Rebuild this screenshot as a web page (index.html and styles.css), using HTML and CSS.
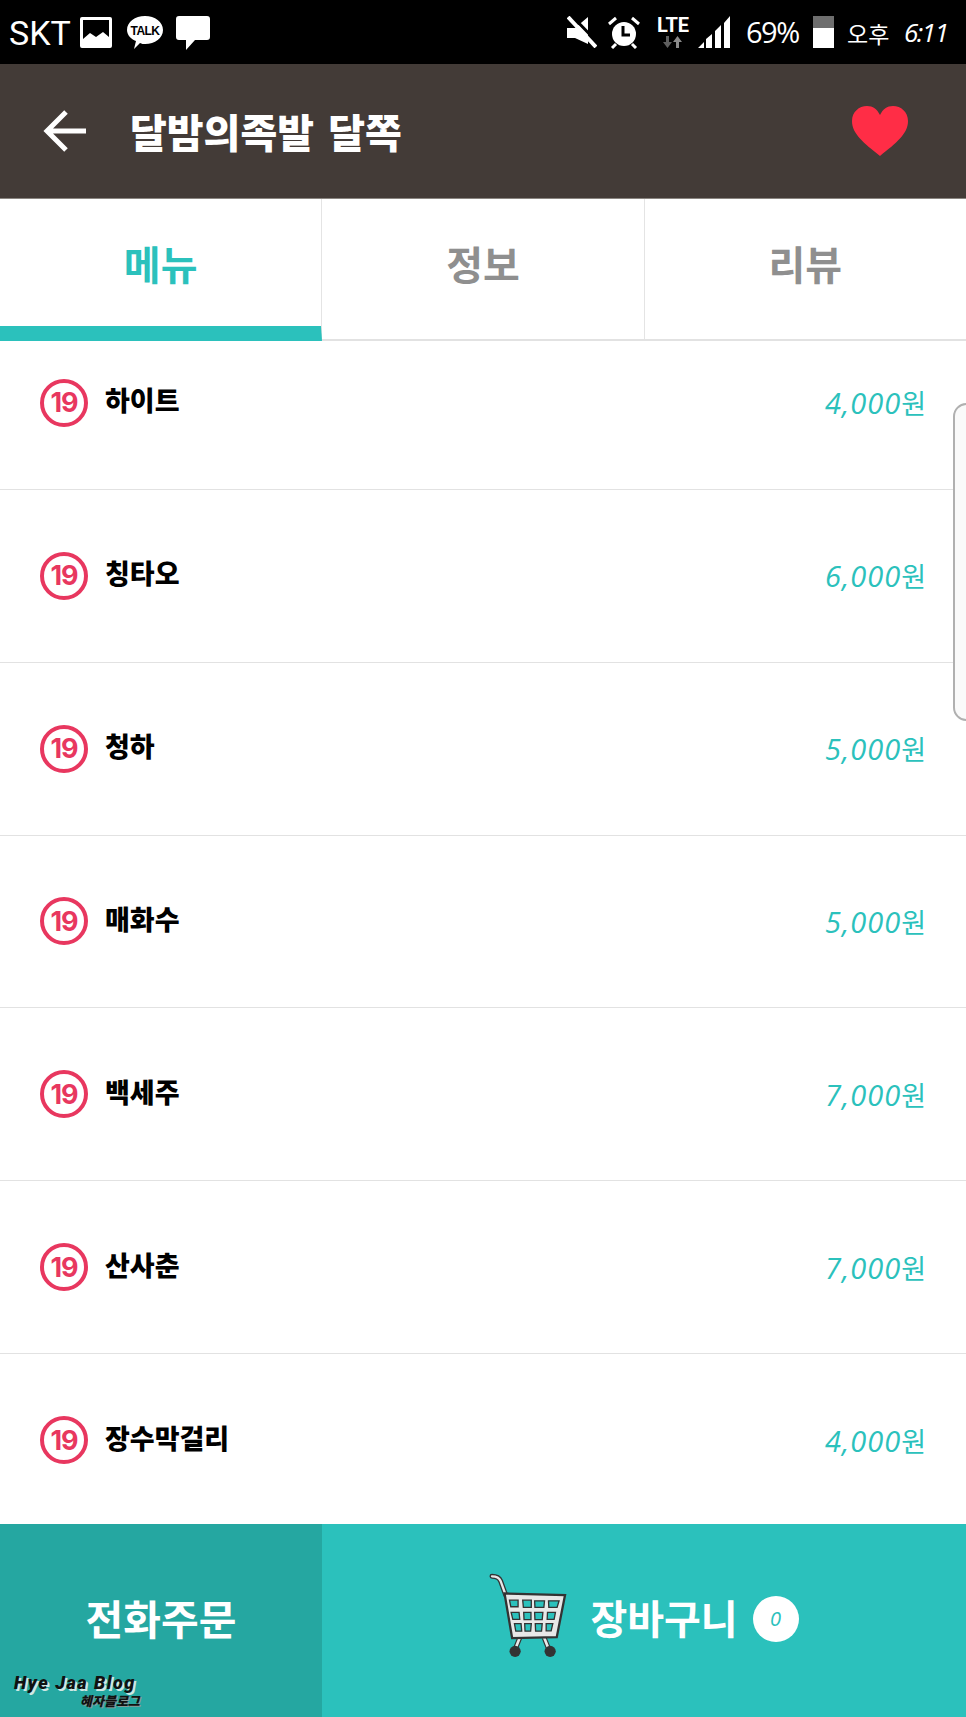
FILE: index.html
```html
<!DOCTYPE html>
<html lang="ko">
<head>
    <meta charset="UTF-8">
    <meta name="viewport" content="width=device-width, initial-scale=1.0">
    <title>달밤의족발 달쪽</title>
    <link rel="stylesheet" href="styles.css">
</head>
<body>
    <div id="page">
        <!-- Status bar -->
        <div class="status-bar">
            <div class="status-left">
                <span class="carrier">SKT</span>
                <svg class="ico-image" viewBox="0 0 32 31"><path fill="#fff" fill-rule="evenodd" d="M2 0h28a2 2 0 0 1 2 2v27a2 2 0 0 1-2 2H2a2 2 0 0 1-2-2V2a2 2 0 0 1 2-2zM3 3v19l7-6 6 4 7-5 6 5V3z"/></svg>
                <svg class="ico-talk" viewBox="0 0 36 34"><path fill="#fff" d="M18 0c10 0 18 6 18 14s-8 14-18 14c-2 0-3 0-5-1l-6 6 2-8C4 23 0 19 0 14 0 6 8 0 18 0z"/><text x="18" y="19" class="talk-text">TALK</text></svg>
                <svg class="ico-msg" viewBox="0 0 34 34"><path fill="#fff" d="M3 0h28a3 3 0 0 1 3 3v18a3 3 0 0 1-3 3H19l-9 10v-10H3a3 3 0 0 1-3-3V3a3 3 0 0 1 3-3z"/></svg>
            </div>
            <div class="status-right">
                <svg class="ico-mute" viewBox="0 0 30 32"><path fill="#fff" d="M0 12h8L21 1v27L8 22H0z"/><path stroke="#000" stroke-width="3" d="M4 -1L33 29"/><path stroke="#fff" stroke-width="4" d="M1 1L29 31"/></svg>
                <svg class="ico-alarm" viewBox="0 0 32 33"><circle cx="16" cy="18" r="12" fill="#fff"/><path d="M15 10v9h7" fill="none" stroke="#000" stroke-width="3"/><path d="M1 8L8 2M24 2L31 8M4 32L8 28M28 32L24 28" stroke="#fff" stroke-width="3"/></svg>
                <div class="lte">
                    <span class="lte-text">LTE</span>
                    <svg class="ico-arrows" viewBox="0 0 20 12"><path fill="#5e5e5e" d="M3 0h3v6h3l-4.500 6L0 6h3z"/><path fill="#8a8a8a" d="M16 12h-3V6h-3l4.500-6L19 6h-3z"/></svg>
                </div>
                <svg class="ico-signal" viewBox="0 0 33 32"><path fill="#fff" d="M0 32L6 26V32zM8 32V23L14 18V32zM17 32V15L23 9V32zM26 32V7L32 0V32z"/></svg>
                <span class="status-pct">69%</span>
                <div class="battery"><div class="battery-cap"></div></div>
                <span class="status-ampm">오후</span>
                <span class="status-time">6:11</span>
            </div>
        </div>

        <!-- Header -->
        <div class="top-bar">
            <svg class="ico-back" viewBox="0 0 44 42"><path d="M43 21H4M23 2L4 21l19 19" fill="none" stroke="#fff" stroke-width="5"/></svg>
            <h1 class="title">달밤의족발 달쪽</h1>
            <svg class="ico-heart" viewBox="0 0 56 50"><path fill="#ff2d46" d="M28 50C12 37 0 28 0 15 0 6 7 0 15 0c6 0 10 3 13 9 3-6 7-9 13-9 8 0 15 6 15 15 0 13-12 22-28 35z"/></svg>
        </div>

        <!-- Tabs -->
        <div class="tabs">
            <div class="tab tab-active">메뉴</div>
            <div class="tab">정보</div>
            <div class="tab">리뷰</div>
        </div>

        <!-- Menu list -->
        <div class="menu-list">
            <div class="menu-row menu-row-first">
                <span class="adult">19</span><span class="menu-name">하이트</span><span class="menu-price">4,000<span class="won">원</span></span>
            </div>
            <div class="menu-row">
                <span class="adult">19</span><span class="menu-name">칭타오</span><span class="menu-price">6,000<span class="won">원</span></span>
            </div>
            <div class="menu-row">
                <span class="adult">19</span><span class="menu-name">청하</span><span class="menu-price">5,000<span class="won">원</span></span>
            </div>
            <div class="menu-row">
                <span class="adult">19</span><span class="menu-name">매화수</span><span class="menu-price">5,000<span class="won">원</span></span>
            </div>
            <div class="menu-row">
                <span class="adult">19</span><span class="menu-name">백세주</span><span class="menu-price">7,000<span class="won">원</span></span>
            </div>
            <div class="menu-row">
                <span class="adult">19</span><span class="menu-name">산사춘</span><span class="menu-price">7,000<span class="won">원</span></span>
            </div>
            <div class="menu-row menu-row-last">
                <span class="adult">19</span><span class="menu-name">장수막걸리</span><span class="menu-price">4,000<span class="won">원</span></span>
            </div>
            <div class="side-handle"></div>
        </div>

        <!-- Bottom buttons -->
        <div class="bottom-bar">
            <div class="btn-phone">전화주문</div>
            <div class="btn-cart">
                <svg class="ico-cart" viewBox="145 212 236 262">
                    <path d="M154 226c14 0 22 4 26 14l16 44" fill="none" stroke="#333" stroke-width="15" stroke-linecap="round"/>
                    <path d="M154 226c14 0 22 4 26 14l16 44" fill="none" stroke="#e8e8e8" stroke-width="7" stroke-linecap="round"/>
                    <path d="M238 412l-12 30M312 412l12 30" stroke="#333" stroke-width="15"/>
                    <path d="M238 412l-12 30M312 412l12 30" stroke="#e8e8e8" stroke-width="8"/>
                    <path fill="#e8e8e8" stroke="#333" stroke-width="7" d="M192 278l183 5-25 127-135 3z"/>
                    <g fill="#2bc1bc" stroke="#333" stroke-width="4">
                        <path d="M207 298h26v20h-22zM247 298h26v22h-24zM283 300h30l-2 20h-27zM325 300h32l-6 20h-25z"/>
                        <path d="M212 335h24l2 21h-21zM250 335h22v22h-21zM283 335h25l-2 22h-22zM322 335h24l-4 21h-21z"/>
                        <path d="M222 369h20l2 23h-18zM253 369h20l-2 23h-17zM285 369h21l-2 23h-18zM318 369h20l-5 22h-15z"/>
                    </g>
                    <circle cx="224" cy="453" r="17" fill="#333"/>
                    <circle cx="330" cy="453" r="17" fill="#333"/>
                </svg>
                <span class="cart-label">장바구니</span>
                <span class="cart-count">0</span>
            </div>
            <div class="watermark">
                <div class="watermark-en">Hye Jaa Blog</div>
                <div class="watermark-ko">혜자블로그</div>
            </div>
        </div>
    </div>
</body>
</html>
```

FILE: styles.css
```css
body {
    margin: 0;
    background-color: #ffffff;
    font-family: "Noto Sans CJK KR", "Noto Sans", sans-serif;
}

#page {
    position: relative;
    display: flex;
    flex-direction: column;
    width: 966px;
    height: 1717px;
    overflow: hidden;
}

/* Status bar */
.status-bar {
    flex-shrink: 0;
    display: flex;
    justify-content: space-between;
    align-items: center;
    height: 64px;
    background-color: #000000;
    color: #ffffff;
}

.status-left {
    display: flex;
    align-items: center;
    padding-left: 9px;
    padding-top: 1px;
}

.carrier {
    font-family: Roboto, sans-serif;
    font-size: 34px;
    line-height: 40px;
}

.ico-image {
    width: 32px;
    height: 31px;
    margin-left: 9px;
}

.ico-talk {
    width: 36px;
    height: 34px;
    margin-left: 15px;
}

.talk-text {
    font-family: "Liberation Sans", sans-serif;
    font-size: 12px;
    font-weight: bold;
    text-anchor: middle;
    letter-spacing: -0.5px;
    fill: #000000;
}

.ico-msg {
    width: 34px;
    height: 34px;
    margin-left: 13px;
}

.status-right {
    display: flex;
    align-items: center;
    padding-right: 20px;
}

.ico-mute {
    width: 30px;
    height: 32px;
}

.ico-alarm {
    width: 32px;
    height: 33px;
    margin-left: 11px;
}

.lte {
    display: flex;
    flex-direction: column;
    align-items: center;
    width: 34px;
    margin-left: 16px;
}

.lte-text {
    font-family: Roboto, sans-serif;
    font-weight: bold;
    font-size: 20px;
    line-height: 18px;
    margin-bottom: 2px;
}

.ico-arrows {
    width: 20px;
    height: 12px;
}

.ico-signal {
    width: 33px;
    height: 32px;
    margin-left: 8px;
}

.status-pct {
    font-family: "Open Sans", sans-serif;
    font-size: 29px;
    line-height: 40px;
    width: 57px;
    margin-left: 15px;
    white-space: nowrap;
    letter-spacing: -1.5px;
}

.battery {
    width: 21px;
    height: 32px;
    margin-left: 10px;
    background-color: #ffffff;
}

.battery-cap {
    height: 12px;
    background-color: #6e6e6e;
}

.status-ampm {
    width: 41px;
    font-size: 23px;
    line-height: 36px;
    margin-left: 13px;
    margin-top: 2px;
    white-space: nowrap;
}

.status-time {
    width: 42px;
    font-family: "Open Sans", sans-serif;
    font-style: italic;
    font-size: 26px;
    line-height: 36px;
    margin-left: 16px;
    letter-spacing: -1.5px;
    white-space: nowrap;
}

/* Header */
.top-bar {
    flex-shrink: 0;
    display: flex;
    align-items: center;
    height: 134px;
    padding-left: 43px;
    padding-right: 58px;
    background-color: #433b37;
    border-bottom: 1px solid #8a8580;
}

.ico-back {
    width: 44px;
    height: 42px;
}

.title {
    flex: 1;
    margin: 0 0 0 43px;
    color: #ffffff;
    font-size: 40px;
    font-weight: 900;
    line-height: 50px;
    word-spacing: 3px;
}

.ico-heart {
    width: 56px;
    height: 50px;
}

/* Tabs */
.tabs {
    flex-shrink: 0;
    display: flex;
    height: 142px;
    border-bottom: 2px solid #e2e2e2;
    box-sizing: border-box;
}

.tab {
    flex: 1;
    display: flex;
    justify-content: center;
    align-items: center;
    box-sizing: border-box;
    padding-bottom: 12px;
    color: #8f8f8f;
    font-size: 40px;
    font-weight: bold;
    border-right: 1px solid #e4e4e4;
}

.tab:last-child {
    border-right: none;
}

.tab-active {
    color: #2bc1bc;
    height: 142px;
    border-bottom: 15px solid #2bc1bc;
    padding-bottom: 0;
}

/* Menu list */
.menu-list {
    position: relative;
    flex: 1;
    min-height: 0;
    overflow: hidden;
}

.menu-row {
    display: flex;
    align-items: center;
    height: 172.8px;
    box-sizing: border-box;
    padding: 0 40px;
    border-bottom: 1px solid #e2e2e2;
}

.menu-row-first {
    height: 149px;
    padding-bottom: 25px;
}

.menu-row-last {
    border-bottom: none;
}

.adult {
    display: flex;
    justify-content: center;
    align-items: center;
    width: 48px;
    height: 48px;
    box-sizing: border-box;
    border: 4px solid #e8375f;
    border-radius: 50%;
    color: #e8375f;
    font-family: Inter, sans-serif;
    font-size: 27px;
    font-weight: bold;
    letter-spacing: -1px;
}

.menu-name {
    flex: 1;
    margin-left: 17px;
    margin-top: -6px;
    color: #000000;
    font-size: 27px;
    font-weight: 900;
}

.menu-price {
    color: #2bc1bc;
    font-family: "Open Sans", "Noto Sans CJK KR", sans-serif;
    font-style: italic;
    font-size: 29px;
    letter-spacing: 1px;
}

.won {
    font-family: "Noto Sans CJK KR", sans-serif;
    font-style: normal;
    font-size: 27px;
    letter-spacing: 0;
}

.side-handle {
    position: absolute;
    right: -14px;
    top: 62px;
    width: 27px;
    height: 318px;
    box-sizing: border-box;
    border: 2px solid #b0b0b0;
    border-radius: 14px;
    background-color: #fafafa;
}

/* Bottom buttons */
.bottom-bar {
    flex-shrink: 0;
    position: relative;
    display: flex;
    height: 193px;
    color: #ffffff;
    font-weight: bold;
}

.btn-phone {
    display: flex;
    justify-content: center;
    align-items: center;
    box-sizing: border-box;
    width: 322px;
    padding-bottom: 8px;
    background-color: #25a7a1;
    font-size: 41px;
}

.btn-cart {
    flex: 1;
    display: flex;
    justify-content: center;
    align-items: center;
    box-sizing: border-box;
    padding-bottom: 8px;
    background-color: #2bc1bc;
    font-size: 40px;
}

.ico-cart {
    width: 78px;
    height: 88px;
    margin-top: -4px;
}

.cart-label {
    margin-left: 23px;
}

.cart-count {
    display: flex;
    justify-content: center;
    align-items: center;
    width: 46px;
    height: 46px;
    margin-left: 15px;
    margin-top: 4px;
    border-radius: 50%;
    background-color: #ffffff;
    color: #2bc1bc;
    font-family: "Open Sans", sans-serif;
    font-style: italic;
    font-weight: 400;
    font-size: 20px;
}

.watermark {
    position: absolute;
    left: 14px;
    bottom: 8px;
    color: #111111;
    font-family: Roboto, sans-serif;
    font-weight: 900;
    font-style: italic;
}

.watermark-en {
    font-size: 18px;
    line-height: 21px;
    letter-spacing: 1.5px;
    text-shadow: 2px 2px 0 #cfe8e4;
}

.watermark-ko {
    margin-left: 66px;
    font-family: "Noto Sans CJK KR", sans-serif;
    font-size: 13px;
    line-height: 16px;
    text-shadow: 1px 1px 0 #8a9a98;
}
```
